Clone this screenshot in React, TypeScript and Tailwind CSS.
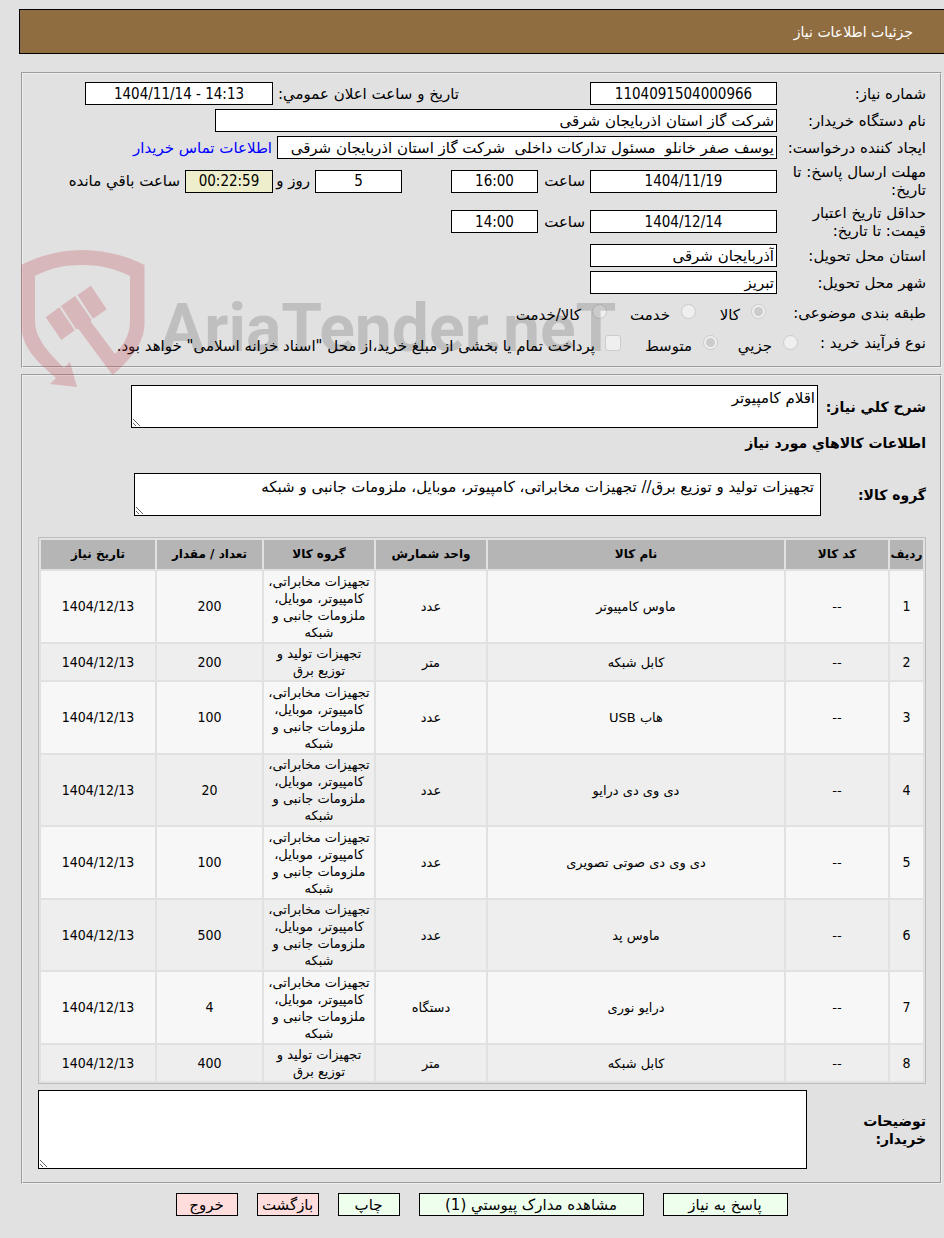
import React from 'react';

type Item = { name: string; unit: string; group: string; qty: string };

const FULL_GROUP = 'تجهیزات مخابراتی، کامپیوتر، موبایل، ملزومات جانبی و شبکه';
const POWER_GROUP = 'تجهیزات تولید و توزیع برق';

const items: Item[] = [
  { name: 'ماوس کامپیوتر', unit: 'عدد', group: FULL_GROUP, qty: '200' },
  { name: 'کابل شبکه', unit: 'متر', group: POWER_GROUP, qty: '200' },
  { name: 'هاب USB', unit: 'عدد', group: FULL_GROUP, qty: '100' },
  { name: 'دی وی دی درایو', unit: 'عدد', group: FULL_GROUP, qty: '20' },
  { name: 'دی وی دی صوتی تصویری', unit: 'عدد', group: FULL_GROUP, qty: '100' },
  { name: 'ماوس پد', unit: 'عدد', group: FULL_GROUP, qty: '500' },
  { name: 'درایو نوری', unit: 'دستگاه', group: FULL_GROUP, qty: '4' },
  { name: 'کابل شبکه', unit: 'متر', group: POWER_GROUP, qty: '400' },
];

const fieldClass = 'h-[23px] shrink-0 border border-black text-black outline-none';
const numberFont = "font-['DejaVu_Sans_Condensed','DejaVu_Sans',sans-serif]";
const radioClass =
  'flex size-[15px] shrink-0 appearance-none items-center justify-center rounded-full border border-[#cbcbcb] bg-[#efefef] before:size-[9px] before:rounded-full checked:before:bg-[#cbcbcb]';
const greenButton = 'h-[23px] border border-black bg-[#eeffee] whitespace-nowrap';
const redButton = 'h-[23px] border border-black bg-[#ffdddd] whitespace-nowrap';

type FieldProps = { id: string; value: string; width: string; numeric?: boolean; bg?: string };

const Field = ({ id, value, width, numeric, bg = 'bg-white' }: FieldProps) => (
  <input
    id={id}
    type="text"
    readOnly
    dir={numeric ? 'ltr' : 'rtl'}
    value={value}
    className={`${fieldClass} ${width} ${bg} ${numeric ? `text-center ${numberFont}` : 'px-[2px]'}`}
  />
);

const Row = ({ label, htmlFor, height = 'h-[27px]', children }: {
  label: string;
  htmlFor?: string;
  height?: string;
  children: React.ReactNode;
}) => (
  <div className={`flex items-center ${height}`}>
    <label htmlFor={htmlFor} className="w-[149px] shrink-0 pl-[9px]">{label}</label>
    {children}
  </div>
);

const Watermark = () => (
  <div dir="ltr" aria-hidden="true" className="pointer-events-none absolute top-[250px] left-5 flex items-start">
    <svg width="126" height="138" viewBox="0 0 126 138" className="shrink-0" fill="rgb(190,61,73)" fillOpacity="0.25">
      <path d="M1 15C22 5 40 0 62 0s42 5 62.500 15v58c0 20-14 37-32 52L58.500 79H56L41 56l14-10 16 23v3l24 32c10-11 15-20 15-33V26C94 18 79 15 62 15S30 18 15 26v45c0 17 13 31 29 47l6-6 7 25-27-3 6-6C15 110 1 96 1 73Z" />
      <path d="M25.700 67.300 39.300 57.300 54.700 80.300 41.300 90Z" />
      <path d="M57.500 45 71 35.700 86.700 59.300 73 68.700Z" />
    </svg>
    <span className="mt-[29px] ml-[14px] font-['Roboto',sans-serif] text-[66px] leading-[100px] font-bold whitespace-nowrap text-black/15">
      AriaTender.neT
    </span>
  </div>
);

export default function App() {
  return (
    <div
      dir="rtl"
      className="relative bg-[#e1e1e1] pt-[9px] pb-[22px] font-['DejaVu_Sans',sans-serif] text-[15px] leading-[18px] text-black"
    >
      <header className="ml-[19px] flex h-[45px] items-center border border-r-0 border-black bg-[#8f6d40] pr-[31px] text-white">
        <h1 className="text-[14px]">جزئیات اطلاعات نیاز</h1>
      </header>

      <main className="mt-[18px] mr-[2px] ml-[21px]">
        <fieldset className="border-2 border-[#f0f0f0] pt-[6px] pr-[14px] pb-2 [border-style:groove]">
          <Row label="شماره نیاز:" htmlFor="need-no">
            <Field id="need-no" value="1104091504000966" width="w-[187px]" numeric />
            <label htmlFor="announce" className="mr-[131px] w-[186px] shrink-0 whitespace-nowrap">تاریخ و ساعت اعلان عمومي:</label>
            <Field id="announce" value="1404/11/14 - 14:13" width="w-[188px]" numeric />
          </Row>
          <Row label="نام دستگاه خریدار:" htmlFor="buyer">
            <Field id="buyer" value="شرکت گاز استان اذربایجان شرقی" width="w-[562px]" />
          </Row>
          <Row label="ایجاد کننده درخواست:" htmlFor="creator">
            <Field id="creator" value="یوسف صفر خانلو  مسئول تدارکات داخلی  شرکت گاز استان اذربایجان شرقی" width="w-[500px]" />
            <a href="#contact" className="mr-[5px] whitespace-nowrap text-[#0000ff]">اطلاعات تماس خریدار</a>
          </Row>
          <Row label="مهلت ارسال پاسخ: تا تاریخ:" htmlFor="deadline" height="h-[40px]">
            <Field id="deadline" value="1404/11/19" width="w-[187px]" numeric />
            <label htmlFor="deadline-time" className="w-[52px] shrink-0 pr-[5px]">ساعت</label>
            <Field id="deadline-time" value="16:00" width="w-[87px]" numeric />
            <span className="w-[49px] shrink-0" />
            <Field id="days" value="5" width="w-[87px]" numeric />
            <label htmlFor="days" className="w-[42px] shrink-0 pr-[5px] whitespace-nowrap">روز و</label>
            <Field id="remaining" value="00:22:59" width="w-[88px]" numeric bg="bg-[#eeeecc]" />
            <label htmlFor="remaining" className="pr-[5px] whitespace-nowrap">ساعت باقي مانده</label>
          </Row>
          <Row label="حداقل تاریخ اعتبار قیمت: تا تاریخ:" htmlFor="validity" height="h-[41px]">
            <Field id="validity" value="1404/12/14" width="w-[187px]" numeric />
            <label htmlFor="validity-time" className="w-[52px] shrink-0 pr-[5px]">ساعت</label>
            <Field id="validity-time" value="14:00" width="w-[87px]" numeric />
          </Row>
          <Row label="استان محل تحویل:" htmlFor="province">
            <Field id="province" value="آذربایجان شرقی" width="w-[187px]" />
          </Row>
          <Row label="شهر محل تحویل:" htmlFor="city">
            <Field id="city" value="تبریز" width="w-[187px]" />
          </Row>

          <div className="flex h-[31px] items-center" role="radiogroup" aria-labelledby="category">
            <span id="category" className="w-[160px] shrink-0 pt-[3px]">طبقه بندی موضوعی:</span>
            <input id="cat-goods" type="radio" name="category" disabled defaultChecked className={radioClass} />
            <label htmlFor="cat-goods" className="w-[55px] shrink-0 pt-[6px] pr-[11px]">کالا</label>
            <input id="cat-service" type="radio" name="category" disabled className={radioClass} />
            <label htmlFor="cat-service" className="w-[74px] shrink-0 pt-[6px] pr-[11px]">خدمت</label>
            <input id="cat-both" type="radio" name="category" disabled className={radioClass} />
            <label htmlFor="cat-both" className="pt-[6px] pr-[11px]">کالا/خدمت</label>
          </div>
          <div className="flex h-[31px] items-center" role="radiogroup" aria-labelledby="process">
            <span id="process" className="w-[128px] shrink-0 whitespace-nowrap">نوع فرآیند خرید :</span>
            <input id="proc-small" type="radio" name="process" disabled className={radioClass} />
            <label htmlFor="proc-small" className="w-[65px] shrink-0 pt-[6px] pr-[11px]">جزیي</label>
            <input id="proc-medium" type="radio" name="process" disabled defaultChecked className={radioClass} />
            <label htmlFor="proc-medium" className="w-[82px] shrink-0 pt-[6px] pr-[11px]">متوسط</label>
            <input id="treasury" type="checkbox" disabled className="size-[16px] shrink-0 appearance-none rounded-[3px] border border-[#cbcbcb] bg-[#efefef]" />
            <label htmlFor="treasury" className="pt-[6px] pr-[10px] whitespace-nowrap">
              پرداخت تمام یا بخشی از مبلغ خرید،از محل "اسناد خزانه اسلامی" خواهد بود.
            </label>
          </div>
        </fieldset>

        <fieldset className="mt-[6px] min-w-0 border-2 border-[#f0f0f0] pt-[9px] pr-[14px] pb-[13px] pl-[15px] [border-style:groove]">
          <div className="flex items-center">
            <label htmlFor="summary" className="w-[108px] shrink-0 text-[14px] font-bold whitespace-nowrap">شرح کلي نیاز:</label>
            <textarea
              id="summary"
              readOnly
              value="اقلام کامپیوتر"
              className="h-[43px] w-[687px] border border-black bg-white px-[2px] py-[3px] outline-none"
            />
          </div>
          <h2 className="mt-[6px] text-[14px] leading-[18px] font-bold">اطلاعات کالاهاي مورد نیاز</h2>
          <div className="mt-[21px] flex items-center">
            <label htmlFor="goods-group" className="w-[105px] shrink-0 text-[14px] font-bold">گروه کالا:</label>
            <textarea
              id="goods-group"
              readOnly
              value="تجهیزات تولید و توزیع برق// تجهیزات مخابراتی، کامپیوتر، موبایل، ملزومات جانبی و شبکه"
              className="h-[43px] w-[687px] border border-black bg-white px-[6px] py-[4px] outline-none"
            />
          </div>

          <table className="mt-[21px] w-full table-fixed border-separate border-spacing-[2px] border border-[#bdbdbd] text-center text-[13px] leading-[17px]">
            <thead>
              <tr className="h-[29px] bg-[#b5b5b5] text-[12px]">
                <th className="w-[33px] whitespace-nowrap">ردیف</th>
                <th className="w-[102px]">کد کالا</th>
                <th>نام کالا</th>
                <th className="w-[110px]">واحد شمارش</th>
                <th className="w-[110px]">گروه کالا</th>
                <th className="w-[105px]">تعداد / مقدار</th>
                <th className="w-[114px]">تاریخ نیاز</th>
              </tr>
            </thead>
            <tbody>
              {items.map((item, idx) => (
                <tr key={idx} className="bg-[#f7f7f7] odd:h-[71px] even:bg-[#eeeeee]">
                  <td className={`${numberFont} text-[14px]`}>{idx + 1}</td>
                  <td>--</td>
                  <td>{item.name}</td>
                  <td>{item.unit}</td>
                  <td className="p-px">{item.group}</td>
                  <td className={`${numberFont} text-[14px]`}>{item.qty}</td>
                  <td className={`${numberFont} text-[14px]`}>1404/12/13</td>
                </tr>
              ))}
            </tbody>
          </table>

          <div className="mt-[6px] flex items-center">
            <label htmlFor="notes" className="w-[119px] shrink-0 pl-10 text-[14px] font-bold">توضیحات خریدار:</label>
            <textarea id="notes" readOnly className="h-[79px] grow border border-black bg-white outline-none" />
          </div>
        </fieldset>

        <div className="mt-[9px] flex justify-center gap-[19px]">
          <button type="button" className={`${greenButton} w-[125px]`}>پاسخ به نیاز</button>
          <button type="button" className={`${greenButton} w-[225px]`}>مشاهده مدارک پیوستي (1)</button>
          <button type="button" className={`${greenButton} w-[62px]`}>چاپ</button>
          <button type="button" className={`${redButton} w-[62px]`}>بازگشت</button>
          <button type="button" className={`${redButton} w-[62px]`}>خروج</button>
        </div>
      </main>

      <Watermark />
    </div>
  );
}
